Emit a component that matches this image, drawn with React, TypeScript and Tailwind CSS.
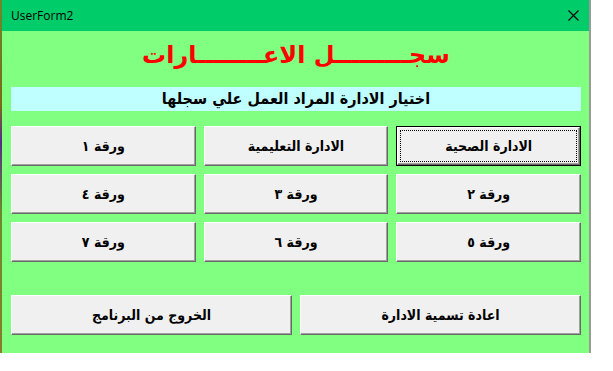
import React from "react";

const arabic = "font-['DejaVu_Sans',sans-serif] font-bold";
const arabicC = "font-['DejaVu_Sans_Condensed','DejaVu_Sans',sans-serif] font-bold";

function Btn({ label, focused = false }: { label: string; focused?: boolean }) {
  if (focused) {
    return (
      <div className="h-[40px] border border-black bg-[#f0f0f0]">
        <div className="h-full border-t border-l border-t-white border-l-white border-b border-r border-b-[#696969] border-r-[#696969] shadow-[inset_-1px_-1px_0_#a0a0a0] p-[2px]">
          <div className="h-full border border-dotted border-black flex items-center justify-center">
            <span dir="rtl" className={`${arabicC} text-[14px] text-black`}>{label}</span>
          </div>
        </div>
      </div>
    );
  }
  return (
    <div className="h-[40px] bg-[#f0f0f0] border-t border-l border-t-white border-l-white border-b border-r border-b-[#696969] border-r-[#696969] shadow-[inset_-1px_-1px_0_#a0a0a0] flex items-center justify-center">
      <span dir="rtl" className={`${arabicC} text-[14px] text-black`}>{label}</span>
    </div>
  );
}

export default function App() {
  return (
    <div className="w-[613px] h-[371px] bg-white overflow-hidden flex items-start">
      <div className="w-[2px] h-[353px] bg-[linear-gradient(180deg,#6a8a2a,#7a6a1a_30%,#5a2a8a_40%,#6a8a2a_60%,#8a7a2a)]" />
      <div className="w-[589px] h-[353px] flex flex-col border-r-2 border-r-[#9a9a9a]">
        <div className="h-[31px] bg-[#00cc6a] flex items-center justify-between pl-[9px] pr-[10px]">
          <span className="font-['Open_Sans',sans-serif] text-[12px] text-black">UserForm2</span>
          <svg width="11" height="11" viewBox="0 0 11 11">
            <path d="M0.5 0.5 L10.5 10.5 M10.5 0.5 L0.5 10.5" stroke="#000" strokeWidth="1.1" />
          </svg>
        </div>
        <div className="flex-1 bg-[#80ff80] pl-[9px] pr-[8px] flex flex-col">
          <div dir="rtl" className={`${arabic} mt-[8px] h-[32px] leading-[32px] text-center text-[24px] text-[#ff0000]`}>
            سجـــــــــل الاعــــــــارات
          </div>
          <div dir="rtl" className={`${arabicC} mt-[16px] h-[24px] bg-[#c0ffff] flex items-center justify-center text-[16px] text-black`}>
            اختيار الادارة المراد العمل علي سجلها
          </div>
          <div dir="rtl" className="mt-[15px] grid grid-cols-3 gap-[8px]">
            <Btn label="الادارة الصحية" focused />
            <Btn label="الادارة التعليمية" />
            <Btn label="ورقة ١" />
            <Btn label="ورقة ٢" />
            <Btn label="ورقة ٣" />
            <Btn label="ورقة ٤" />
            <Btn label="ورقة ٥" />
            <Btn label="ورقة ٦" />
            <Btn label="ورقة ٧" />
          </div>
          <div dir="rtl" className="mt-[33px] grid grid-cols-2 gap-[8px]">
            <Btn label="اعادة تسمية الادارة" />
            <Btn label="الخروج من البرنامج" />
          </div>
        </div>
      </div>
    </div>
  );
}
